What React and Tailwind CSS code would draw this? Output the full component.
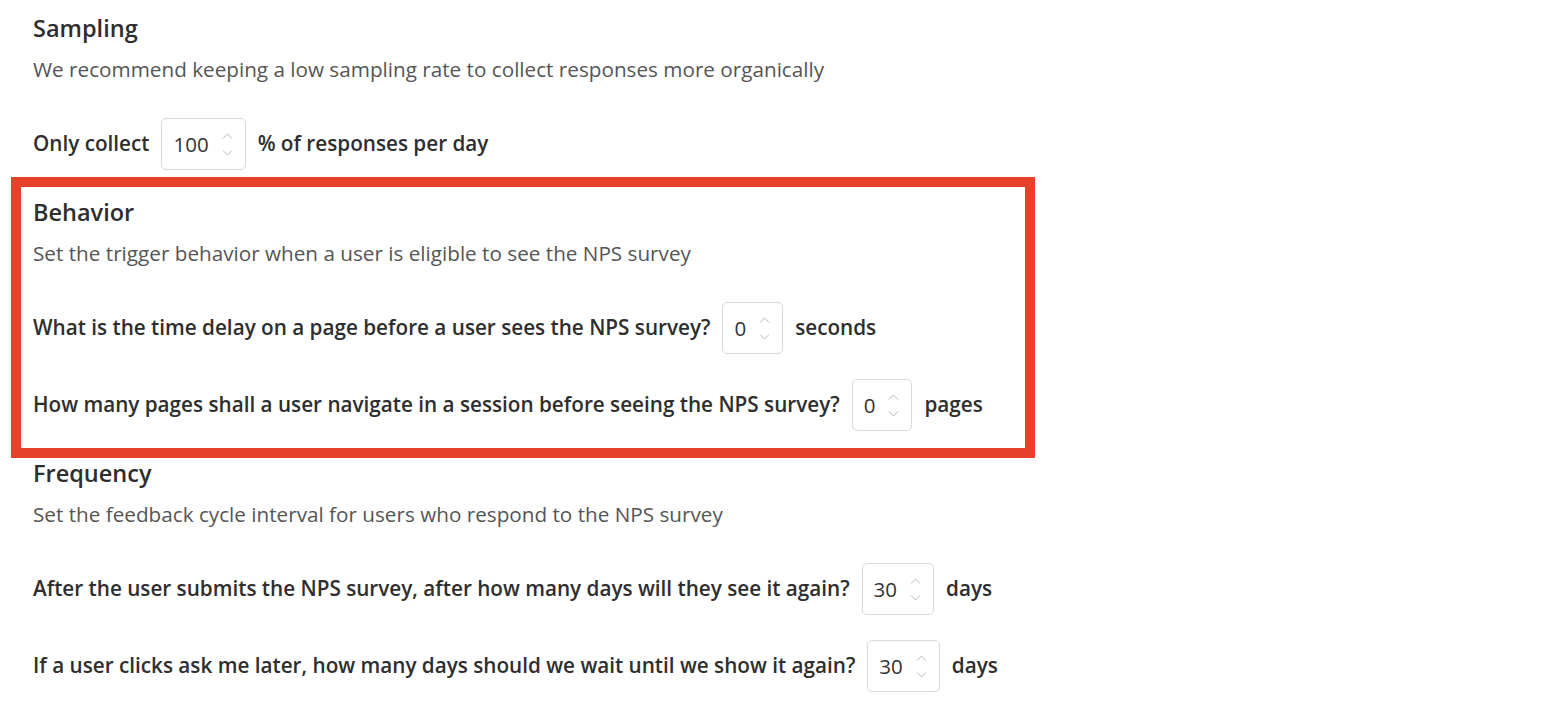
import React, { useState } from "react";

const NumberBox = ({ value }) => {
  const [val, setval] = useState(value);
  return (
    <div className="flex items-center h-[52px] pl-[11px] pr-[12px] border border-[#d9d9d9] rounded-[5px] bg-white">
      <span className="text-[20.5px] text-[#333333] font-normal">{val}</span>
      <div className="flex flex-col items-center ml-[13px] gap-[11px]">
        <button onClick={() => setval(Number(val) + 1)} className="block leading-none">
          <svg width="11" height="6" viewBox="0 0 11 6" fill="none">
            <path d="M1 5.5 L5.5 1 L10 5.5" stroke="#b5b5b5" strokeWidth="1" />
          </svg>
        </button>
        <button onClick={() => setval(Math.max(0, Number(val) - 1))} className="block leading-none">
          <svg width="11" height="6" viewBox="0 0 11 6" fill="none">
            <path d="M1 0.5 L5.5 5 L10 0.5" stroke="#b5b5b5" strokeWidth="1" />
          </svg>
        </button>
      </div>
    </div>
  );
};

const Row = ({ label, value, unit, first }) => (
  <div className={`flex items-center gap-[12px] ${first ? "mt-[35px]" : "mt-[25px]"}`}>
    <span className="text-[20.7px] font-semibold text-[#2e2e2e]">{label}</span>
    <NumberBox value={value} />
    <span className="text-[20.7px] font-semibold text-[#2e2e2e]">{unit}</span>
  </div>
);

const Section = ({ title, desc, rows }) => (
  <div>
    <h2 className="text-[23.5px] leading-[30px] font-semibold text-[#2e2e2e]">{title}</h2>
    <p className="mt-[12px] text-[20.7px] leading-[28px] text-[#555555]">{desc}</p>
    {rows.map((r, i) => (
      <Row key={r.label} {...r} first={i === 0} />
    ))}
  </div>
);

export default function App() {
  return (
    <div className="min-h-screen bg-white pl-[33px] pt-[13px]" style={{ fontFamily: '"Open Sans", "Noto Sans", sans-serif' }}>
      <Section
        title="Sampling"
        desc="We recommend keeping a low sampling rate to collect responses more organically"
        rows={[{ label: "Only collect", value: 100, unit: "% of responses per day" }]}
      />

      <div className="mt-[7px] -ml-[22px] w-[1024px] border-[10px] border-[#e8412a] pl-[12px] pt-[10px] pb-[17px]">
        <Section
          title="Behavior"
          desc="Set the trigger behavior when a user is eligible to see the NPS survey"
          rows={[
            { label: "What is the time delay on a page before a user sees the NPS survey?", value: 0, unit: "seconds" },
            { label: "How many pages shall a user navigate in a session before seeing the NPS survey?", value: 0, unit: "pages" },
          ]}
        />
      </div>

      <Section
        title="Frequency"
        desc="Set the feedback cycle interval for users who respond to the NPS survey"
        rows={[
          { label: "After the user submits the NPS survey, after how many days will they see it again?", value: 30, unit: "days" },
          { label: "If a user clicks ask me later, how many days should we wait until we show it again?", value: 30, unit: "days" },
        ]}
      />
    </div>
  );
}
